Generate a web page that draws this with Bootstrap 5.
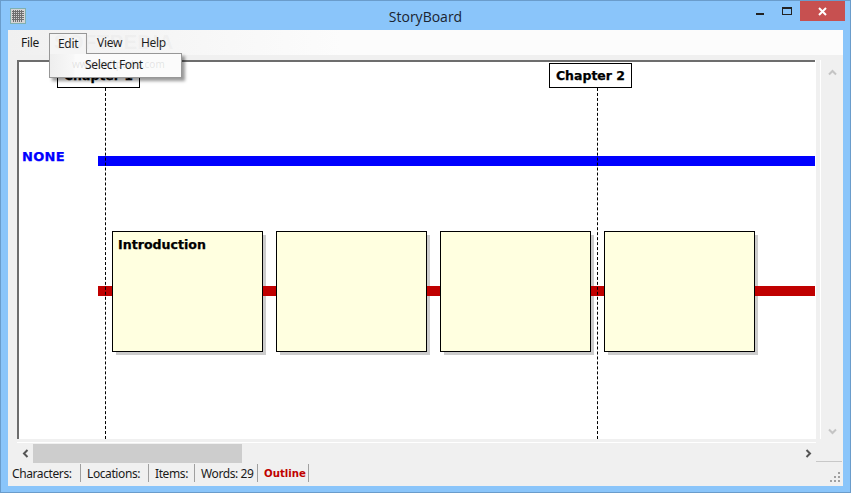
<!DOCTYPE html>
<html lang="en">
<head>
<meta charset="utf-8">
<title>StoryBoard</title>
<link href="https://cdn.jsdelivr.net/npm/bootstrap@5.3.0/dist/css/bootstrap.min.css" rel="stylesheet">
<style>
html,body{margin:0;height:493px;overflow:hidden;background:#8ac5fa;font-family:"Noto Sans","Liberation Sans",sans-serif;}
.win{width:851px;height:493px;border:1px solid #6a9ccb;background:#8ac5fa;position:relative;}
.titlebar{height:29px;padding-left:9px;}
.ttl{position:absolute;left:0;right:0;top:6px;text-align:center;font-size:14px;line-height:20px;color:#1a2430;font-family:"Open Sans","Noto Sans",sans-serif;}
.wbtns{margin-left:auto;margin-right:5px;height:20px;align-self:flex-start;}
.wb{width:27px;height:20px;display:flex;align-items:center;justify-content:center;}
.wb-close{width:45px;background:#c75050;}
.client{margin:0 7px 6px 7px;height:456px;background:#f0f0f0;}
.menubar{height:25px;background:linear-gradient(90deg,#f0f0f0 0,#fcfcfc 40%,#fcfcfc 100%);padding:3px 0 0 4px;font-size:12px;letter-spacing:-.3px;color:#1a1a1a;}
.mi{padding:0 0 0 10px;line-height:20px;height:20px;flex:none;}
.mi-file{width:37px;padding-left:9px;}
.mi-view{width:44px;}
.mi-open{border:1px solid #979797;border-bottom:0;background:#f5f5f5;position:relative;z-index:6;padding-left:8px;height:21px;line-height:19px;width:38px;}
.menu-pop{position:absolute;display:block;left:48px;top:52px;width:133px;height:25px;min-width:0;padding:0;margin:0;border:1px solid #979797;border-radius:0;background:linear-gradient(90deg,#eee 0,#f8f8f8 24px,#fbfbfb 25px,#fbfbfb 100%);box-shadow:3px 3px 3px rgba(0,0,0,.4);z-index:5;font-size:12px;letter-spacing:-.35px;line-height:21px;color:#1a1a1a;}
.menu-pop span{padding-left:35px;}
.wm1{position:absolute;left:53px;top:26px;font-size:20px;font-weight:700;letter-spacing:.6px;color:rgba(200,200,200,.14);z-index:7;font-family:"Liberation Sans",sans-serif;pointer-events:none;}
.wm2{position:absolute;left:71px;top:56px;font-size:10px;color:rgba(120,120,120,.18);z-index:7;pointer-events:none;}
.work{height:384px;padding-top:5px;}
.canvas{flex:none;width:798px;margin-left:9px;height:379px;background:#fff;border-top:2px solid #6d6d6d;border-left:2px solid #6d6d6d;position:relative;overflow:hidden;}
.edge-r{flex:none;width:6px;border-left:1px solid #fff;border-right:1px solid #fff;background:#f0f0f0;}
.vbar{flex:none;width:22px;padding:5px 0 0;}
.chap{position:absolute;top:1px;width:83px;height:25px;border:1px solid #000;background:#fff;text-align:center;font:700 12.5px/23px "DejaVu Sans",sans-serif;letter-spacing:0;-webkit-text-stroke:.25px #000;color:#000;z-index:2;}
.dash{position:absolute;top:26px;bottom:0;width:0;border-left:1px dashed #000;z-index:3;}
.lane{position:absolute;left:79px;right:0;height:10px;z-index:2;}
.lane-blue{top:94px;background:#0000ff;}
.lane-red{top:224px;background:#c00000;}
.lbl{position:absolute;left:3px;top:87px;font:700 13px/15px "DejaVu Sans",sans-serif;letter-spacing:.3px;-webkit-text-stroke:.25px #0000ff;color:#0000ff;}
.note{position:absolute;top:169px;width:151px;height:121px;border:1px solid #000;background:#ffffe0;z-index:4;padding:4px 5px;font:700 12.6px/18px "DejaVu Sans",sans-serif;color:#000;-webkit-text-stroke:.25px #000;}
.nshade{position:absolute;top:173px;width:150px;height:120px;background:#ccc;z-index:1;}
.hwrap{height:21px;border-top:1px solid #fff;margin:3px 27px 0 9px;padding-top:1px;}
.hbar{height:19px;width:799px;}
.thumb{width:209px;height:19px;background:#cdcdcd;}
.arw{width:16px;height:19px;display:flex;align-items:center;justify-content:center;}
.status{height:23px;font-size:12px;letter-spacing:-.4px;color:#1a1a1a;padding:1px 0 0 0;position:relative;}
.sc{height:18px;line-height:20px;border-right:1px solid #a0a0a0;padding:0 0 0 6px;flex:none;white-space:nowrap;}
.sc-first{padding-left:4px;}
.sc-red{color:#c00000;font-weight:700;font-family:"DejaVu Sans",sans-serif;font-size:10.2px;letter-spacing:0;}
.grip{position:absolute;right:3px;bottom:4px;}
.srule{position:absolute;right:1px;top:-2px;width:26px;height:1px;background:#c8c8c8;}
</style>
</head>
<body>
<div class="win">
  <div class="titlebar d-flex align-items-center">
    <svg width="16" height="16" viewBox="0 0 16 16"><rect x=".5" y=".5" width="15" height="15" fill="#d4d4d4" stroke="#7fb0b0"/><path d="M3.500 2v12M5.500 2v12M7.500 2v12M9.500 2v12M11.500 2v12M2 3.500h12M2 5.500h12M2 7.500h12M2 9.500h12M2 11.500h12" stroke="#6e6e6e" stroke-width="1"/></svg>
    <div class="ttl">StoryBoard</div>
    <div class="wbtns d-flex">
      <div class="wb"><svg width="8" height="8" viewBox="0 0 8 8"><rect x="0" y="6" width="8" height="2" fill="#222"/></svg></div>
      <div class="wb"><svg width="10" height="8" viewBox="0 0 10 8"><rect x=".5" y=".5" width="9" height="7" fill="none" stroke="#222"/><rect x="0" y="0" width="10" height="2" fill="#222"/></svg></div>
      <div class="wb wb-close"><svg width="9" height="9" viewBox="0 0 9 9"><path d="M1 1l7 7M8 1l-7 7" stroke="#fff" stroke-width="2"/></svg></div>
    </div>
  </div>
  <div class="client">
    <nav class="menubar d-flex">
      <div class="mi mi-file">File</div>
      <div class="mi mi-open">Edit</div>
      <div class="mi mi-view">View</div>
      <div class="mi">Help</div>
    </nav>
    <div class="dropdown-menu menu-pop"><span>Select Font</span></div>
    <div class="wm1">SOFTPEDIA</div>
    <div class="wm2">www.softpedia.com</div>
    <div class="work d-flex">
      <div class="canvas">
        <div class="chap" style="left:38px">Chapter 1</div>
        <div class="chap" style="left:530px">Chapter 2</div>
        <div class="dash" style="left:86px"></div>
        <div class="dash" style="left:578px"></div>
        <div class="lbl">NONE</div>
        <div class="lane lane-blue"></div>
        <div class="lane lane-red"></div>
        <div class="nshade" style="left:97px"></div>
        <div class="nshade" style="left:261px"></div>
        <div class="nshade" style="left:425px"></div>
        <div class="nshade" style="left:589px"></div>
        <div class="note" style="left:93px">Introduction</div>
        <div class="note" style="left:257px"></div>
        <div class="note" style="left:421px"></div>
        <div class="note" style="left:585px"></div>
      </div>
      <div class="edge-r"></div>
      <div class="vbar d-flex flex-column justify-content-between align-items-center">
        <svg class="mt-1" width="9" height="7" viewBox="0 0 9 7"><path d="M1 5.500l3.500-3.500 3.500 3.500" fill="none" stroke="#c4c4c4" stroke-width="2"/></svg>
        <svg class="mb-1" width="9" height="7" viewBox="0 0 9 7"><path d="M1 1.500l3.500 3.500 3.500-3.500" fill="none" stroke="#c4c4c4" stroke-width="2"/></svg>
      </div>
    </div>
    <div class="hwrap">
      <div class="hbar d-flex align-items-center">
        <div class="arw"><svg width="7" height="9" viewBox="0 0 7 9"><path d="M5.500 1L2 4.500l3.500 3.500" fill="none" stroke="#555" stroke-width="2"/></svg></div>
        <div class="thumb"></div>
        <div class="arw ms-auto"><svg width="7" height="9" viewBox="0 0 7 9"><path d="M1.500 1L5 4.500 1.500 8" fill="none" stroke="#555" stroke-width="2"/></svg></div>
      </div>
    </div>
    <div class="status d-flex">
      <div class="sc sc-first" style="width:73px">Characters:</div>
      <div class="sc" style="width:68px">Locations:</div>
      <div class="sc" style="width:46px">Items:</div>
      <div class="sc" style="width:63px">Words: 29</div>
      <div class="sc sc-red" style="width:51px">Outline</div>
      <div class="srule"></div>
      <svg class="grip" width="10" height="10" viewBox="0 0 10 10"><path d="M8 0h2v2H8zM4 4h2v2H4zM8 4h2v2H8zM0 8h2v2H0zM4 8h2v2H4zM8 8h2v2H8z" fill="#a0a0a0"/></svg>
    </div>
  </div>
</div>
</body>
</html>
